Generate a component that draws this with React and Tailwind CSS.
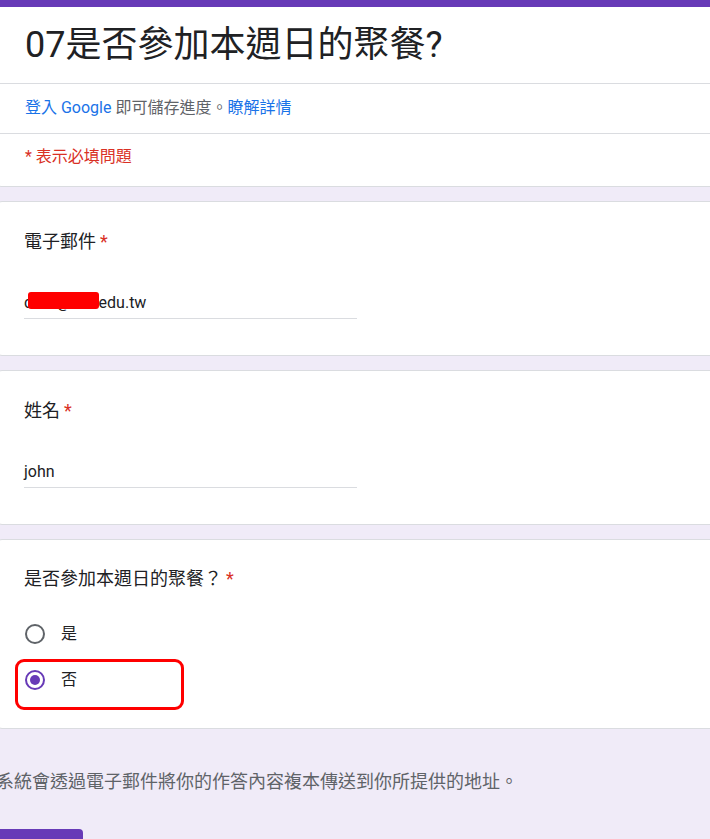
const font = { fontFamily: 'Roboto, "Noto Sans CJK TC", sans-serif' };

const Card = ({ children, className = '' }) => (
  <div className={`relative bg-white border border-[#dadce0] rounded-lg ${className}`}>{children}</div>
);

const Required = () => <span className="text-[#d93025] ml-1">*</span>;

const TextQuestion = ({ label, value, redact }) => (
  <Card className="pl-[29px] pt-[28px] pb-[36px]">
    <div className="text-[18px] leading-6 text-[#202124]">
      {label}
      <Required />
    </div>
    <div className="relative mt-[37px] w-[333px] border-b border-[#dadce0] pb-[3px] text-[16px] leading-6 text-[#202124]">
      {value}
      {redact && <div className="absolute left-[4px] top-[1px] w-[71px] h-[17px] bg-[#ff0000] rounded-[3px]" />}
    </div>
  </Card>
);

const Radio = ({ checked, label }) => (
  <div className="flex items-center h-[46px]">
    <div
      className={`w-5 h-5 rounded-full border-2 flex items-center justify-center ml-[1px] ${
        checked ? 'border-[#673ab7]' : 'border-[#5f6368]'
      }`}
    >
      {checked && <div className="w-2.5 h-2.5 rounded-full bg-[#673ab7]" />}
    </div>
    <span className="ml-4 text-[16px] text-[#202124]">{label}</span>
  </div>
);

export default function App() {
  return (
    <div className="w-[710px] h-[839px] overflow-hidden bg-[#f0ebf8]" style={font}>
      <div className="ml-[-6px] w-[790px] flex flex-col gap-[14px]">
        {/* Header card */}
        <div className="bg-white border border-[#dadce0] border-t-0 rounded-b-lg overflow-hidden">
          <div className="h-[7px] bg-[#673ab7]" />
          <div className="pl-[30px] pt-[18px] pb-[18px] text-[36px] leading-10 text-[#202124]">
            07是否參加本週日的聚餐?
          </div>
          <div className="border-t border-[#dadce0] pl-[30px] pt-[12px] pb-[13px] text-[16px] leading-6 text-[#5f6368]">
            <span className="text-[#1a73e8]">登入 Google</span> 即可儲存進度。
            <span className="text-[#1a73e8]">瞭解詳情</span>
          </div>
          <div className="border-t border-[#dadce0] pl-[30px] pt-[11px] pb-[17px] text-[16px] leading-6 text-[#d93025]">
            * 表示必填問題
          </div>
        </div>

        <TextQuestion label="電子郵件" value="cxxx@xxx.edu.tw" redact />
        <TextQuestion label="姓名" value="john" />

        <Card className="pl-[29px] pt-[27px] pb-[25px]">
          <div className="text-[18px] leading-6 text-[#202124]">
            是否參加本週日的聚餐？<span className="text-[#d93025] ml-[4px]">*</span>
          </div>
          <div className="mt-[20px]">
            <Radio label="是" />
            <Radio label="否" checked />
          </div>
          <div className="absolute left-[20px] top-[119px] w-[169px] h-[51px] border-[3px] border-[#ff0000] rounded-[9px]" />
        </Card>
      </div>

      <div className="ml-[-4px] mt-[41px] text-[18px] leading-6 text-[#5f6368] whitespace-nowrap">
        系統會透過電子郵件將你的作答內容複本傳送到你所提供的地址。
      </div>
      <div className="mt-[35px] w-[83px] h-[20px] bg-[#673ab7] rounded-tr-[4px]" />
    </div>
  );
}
